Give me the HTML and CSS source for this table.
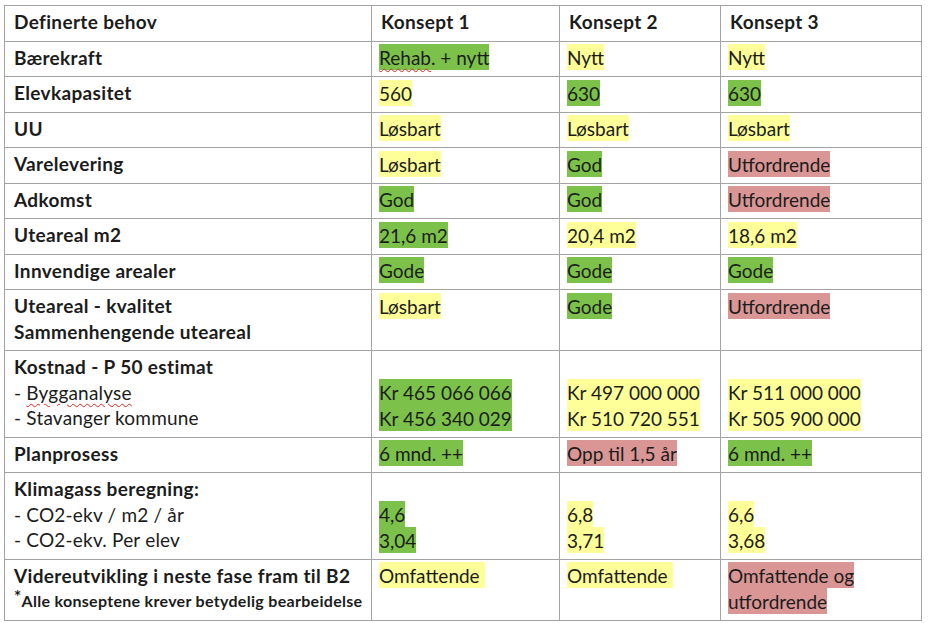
FILE: index.html
```html
<!DOCTYPE html>
<html lang="no">
<head>
<meta charset="utf-8">
<title>Konsepter</title>
<link rel="stylesheet" href="styles.css">
</head>
<body>
<div class="page">
<table class="grid">
  <colgroup>
    <col class="c1"><col class="c2"><col class="c3"><col class="c4">
  </colgroup>
  <tr>
    <th>Definerte behov</th><th>Konsept 1</th><th>Konsept 2</th><th>Konsept 3</th>
  </tr>
  <tr>
    <th>Bærekraft</th>
    <td><span class="hl g"><span class="sp">Rehab</span>. + nytt</span></td>
    <td><span class="hl y">Nytt</span></td>
    <td><span class="hl y">Nytt</span></td>
  </tr>
  <tr>
    <th>Elevkapasitet</th>
    <td><span class="hl y">560</span></td>
    <td><span class="hl g">630</span></td>
    <td><span class="hl g">630</span></td>
  </tr>
  <tr>
    <th>UU</th>
    <td><span class="hl y">Løsbart</span></td>
    <td><span class="hl y">Løsbart</span></td>
    <td><span class="hl y">Løsbart</span></td>
  </tr>
  <tr>
    <th>Varelevering</th>
    <td><span class="hl y">Løsbart</span></td>
    <td><span class="hl g">God</span></td>
    <td><span class="hl r">Utfordrende</span></td>
  </tr>
  <tr>
    <th>Adkomst</th>
    <td><span class="hl g">God</span></td>
    <td><span class="hl g">God</span></td>
    <td><span class="hl r">Utfordrende</span></td>
  </tr>
  <tr>
    <th>Uteareal m2</th>
    <td><span class="hl g">21,6 m2</span></td>
    <td><span class="hl y">20,4 m2</span></td>
    <td><span class="hl y">18,6 m2</span></td>
  </tr>
  <tr>
    <th>Innvendige arealer</th>
    <td><span class="hl g">Gode</span></td>
    <td><span class="hl g">Gode</span></td>
    <td><span class="hl g">Gode</span></td>
  </tr>
  <tr>
    <th>Uteareal - kvalitet<br>Sammenhengende uteareal</th>
    <td><span class="hl y">Løsbart</span></td>
    <td><span class="hl g">Gode</span></td>
    <td><span class="hl r">Utfordrende</span></td>
  </tr>
  <tr>
    <th>Kostnad - P 50 estimat
      <span class="sub">- <span class="sp">Bygganalyse</span></span>
      <span class="sub">- Stavanger kommune</span></th>
    <td><span class="blank"></span><span class="hl g">Kr 465 066 066<br>Kr 456 340 029</span></td>
    <td><span class="blank"></span><span class="hl y">Kr 497 000 000 <br>Kr 510 720 551 </span></td>
    <td><span class="blank"></span><span class="hl y">Kr 511 000 000<br>Kr 505 900 000</span></td>
  </tr>
  <tr>
    <th>Planprosess</th>
    <td><span class="hl g">6 mnd. ++</span></td>
    <td><span class="hl r">Opp til 1,5 år</span></td>
    <td><span class="hl g">6 mnd. ++</span></td>
  </tr>
  <tr>
    <th>Klimagass beregning:
      <span class="sub">- CO2-ekv / m2 / år</span>
      <span class="sub">- CO2-ekv. Per elev</span></th>
    <td><span class="blank"></span><span class="hl g">4,6</span><br><span class="hl g">3,04</span></td>
    <td><span class="blank"></span><span class="hl y">6,8</span><br><span class="hl y">3,71</span></td>
    <td><span class="blank"></span><span class="hl y">6,6</span><br><span class="hl y">3,68</span></td>
  </tr>
  <tr>
    <th>Videreutvikling i neste fase fram til B2
      <span class="note"><sup>*</sup>Alle konseptene krever betydelig bearbeidelse</span></th>
    <td><span class="hl y">Omfattende&nbsp;</span></td>
    <td><span class="hl y">Omfattende&nbsp;</span></td>
    <td><span class="hl r">Omfattende og utfordrende</span></td>
  </tr>
</table>
</div>
</body>
</html>
```

FILE: styles.css
```css
html, body {
  margin: 0;
  padding: 0;
  background: #ffffff;
}
body {
  font-family: Lato, "Open Sans", "Liberation Sans", sans-serif;
  font-size: 19px;
  color: #1c1c1c;
}
.page {
  padding: 5px 0 0 4px;
}
.grid {
  border-collapse: collapse;
  table-layout: fixed;
  width: 918px;
}
.c1 { width: 367px; }
.c2 { width: 188px; }
.c3 { width: 161px; }
.c4 { width: 201px; }
.grid th, .grid td {
  border: 1px solid #a3a3a3;
  text-align: left;
  vertical-align: top;
  line-height: 25.5px;
  padding: 3px 6px 6px 7px;
}
.grid th {
  font-weight: 700;
  letter-spacing: 0.35px;
  padding-left: 9px;
}
.grid td {
  font-weight: 400;
}
.sub {
  display: block;
  font-weight: 400;
  letter-spacing: 0.2px;
}
.note {
  display: block;
  font-size: 16px;
  font-weight: 700;
  letter-spacing: 0.3px;
}
.note sup {
  font-size: 17px;
  vertical-align: 4px;
  line-height: 0;
}
.blank {
  display: block;
  height: 25.5px;
}
.hl {
  padding: 1.5px 0;
  -webkit-box-decoration-break: clone;
  box-decoration-break: clone;
}
.g { background: #7cc24a; }
.y { background: #ffff99; }
.r { background: #d99694; }
.sp {
  text-decoration: underline wavy #e0281e;
  text-decoration-thickness: 1px;
  text-underline-offset: 3px;
}
```
